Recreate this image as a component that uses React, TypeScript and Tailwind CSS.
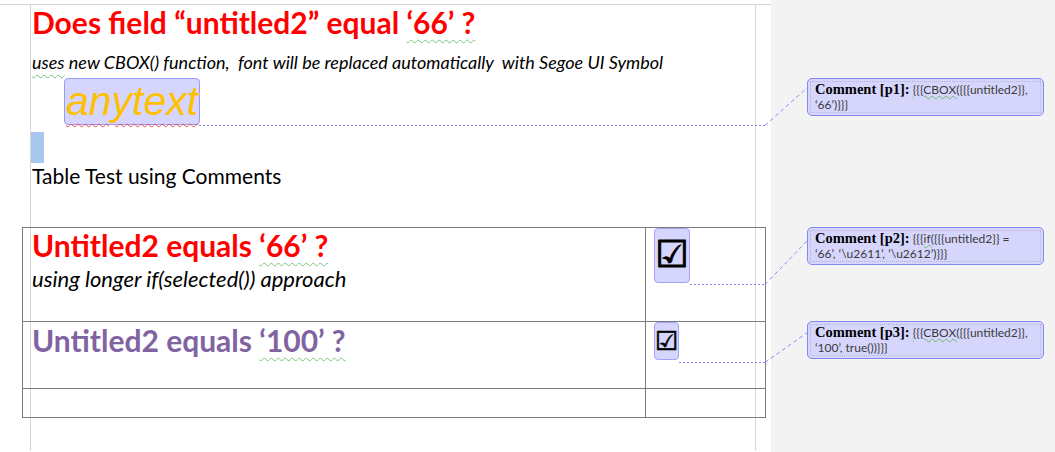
import React from "react";

const calibri = { fontFamily: "Lato, 'Open Sans', sans-serif" };

function Comment({ tag, first, second }: { tag: string; first: React.ReactNode; second: React.ReactNode }) {
  return (
    <div className="w-[237px] rounded-[5px] border-[1.5px] border-[#8686f2] bg-[#d6d6fd] p-[2px]">
      <div className="border border-dotted border-[#b4b4d8] px-[4px] text-[12px] leading-[15px] text-[#3a3a3a]" style={calibri}>
        <span className="font-['Liberation_Serif',serif] text-[14.5px] font-bold text-black">Comment [{tag}]:</span>{" "}
        {first}
        <br />
        {second}
      </div>
    </div>
  );
}

const wavyGreen = "underline decoration-wavy decoration-[#7bc47b] decoration-1 underline-offset-[5px]";

export default function App() {
  return (
    <div className="relative flex h-[452px] w-[1055px] overflow-hidden bg-white">
      {/* page */}
      <div className="w-[771px] shrink-0 bg-white">
        <div className="h-[5px] border-b border-[#d4d4d4]" />
        <div className="ml-[30px] h-[446px] w-[726px] border-x border-[#d6d6d6] pl-px" style={calibri}>
          <h1 className="text-[30px] font-bold leading-[34px] text-[#ff0000]">
            Does field “untitled2” equal <span className={wavyGreen}>‘66’ ?</span>
          </h1>
          <p className="mt-[12px] whitespace-pre text-[18px] italic leading-[22px] text-black">
            <span className={wavyGreen}>uses</span> new CBOX() function,  font will be replaced automatically  with Segoe UI Symbol
          </p>
          <div className="ml-[32px] mt-[5px] flex h-[47px] w-[136px] items-start rounded-[4px] border border-[#9a9af4] bg-[#d5d5fd] pl-[1px]">
            <span className="font-['Liberation_Sans',sans-serif] text-[41px] italic leading-[44px] text-[#ffc000] underline decoration-wavy decoration-[#e05050] decoration-1 underline-offset-[8px]">
              anytext
            </span>
          </div>
          <div className="-ml-px mt-[7px] h-[31px] w-[13px] bg-[#a9c7ee]" />
          <p className="mt-[1px] text-[21px] leading-[24px] text-black">Table Test using Comments</p>

          <table className="-ml-[10px] mt-[39px] w-[744px] border-collapse">
            <tbody>
              <tr className="h-[94px]">
                <td className="border border-[#7c7c7c] pl-[9px] align-top">
                  <div className="text-[30px] font-bold leading-[34px] text-[#ff0000]">
                    Untitled2 equals <span className={wavyGreen}>‘66’ ?</span>
                  </div>
                  <div className="mt-[4px] text-[22px] italic leading-[26px] text-black">using longer if(selected()) approach</div>
                </td>
                <td className="w-[120px] border border-[#7c7c7c] pl-[8px] align-top">
                  <div className="flex h-[55px] w-[36px] items-center justify-center rounded-[4px] border border-[#a4a4f6] bg-[#d5d5fd] pb-[2px]">
                    <span className="font-['DejaVu_Sans',sans-serif] text-[37px] leading-none text-black [-webkit-text-stroke:1px_black]">☑</span>
                  </div>
                </td>
              </tr>
              <tr className="h-[67px]">
                <td className="border border-[#7c7c7c] pl-[9px] align-top">
                  <div className="mt-[1px] text-[30px] font-bold leading-[34px] text-[#8064a2]">
                    Untitled2 equals <span className={wavyGreen}>‘100’ ?</span>
                  </div>
                </td>
                <td className="border border-[#7c7c7c] pl-[8px] align-top">
                  <div className="flex h-[38px] w-[25px] items-center justify-center rounded-[4px] border border-[#a4a4f6] bg-[#d5d5fd]">
                    <span className="font-['DejaVu_Sans',sans-serif] text-[26px] leading-none text-black [-webkit-text-stroke:0.6px_black]">☑</span>
                  </div>
                </td>
              </tr>
              <tr className="h-[29px]">
                <td className="border border-[#7c7c7c]" />
                <td className="border border-[#7c7c7c]" />
              </tr>
            </tbody>
          </table>
        </div>
      </div>

      {/* comment pane */}
      <div className="flex-1 bg-[#f3f3f3] pl-[36px]">
        <div className="mt-[78px]">
          <Comment
            tag="p1"
            first={<><span className="underline decoration-wavy decoration-[#6cb86c] decoration-1">{"{{{CBOX("}</span>{"{{{untitled2}},"}</>}
            second="‘66’)}}}"
          />
        </div>
        <div className="mt-[111px]">
          <Comment
            tag="p2"
            first={<>{"{{{"}<span className="underline decoration-wavy decoration-[#6cb86c] decoration-1">if(</span>{"{{{untitled2}} ="}</>}
            second={"‘66’, ‘\\u2611’, ‘\\u2612’)}}}"}
          />
        </div>
        <div className="mt-[56px]">
          <Comment
            tag="p3"
            first={<><span className="underline decoration-wavy decoration-[#6cb86c] decoration-1">{"{{{CBOX("}</span>{"{{{untitled2}},"}</>}
            second="‘100’, true())}}}"
          />
        </div>
      </div>

      {/* connector lines */}
      <svg className="pointer-events-none absolute inset-0" width="1055" height="452">
        <g stroke="#8a8aff" strokeWidth="1" fill="none">
          <path d="M199 125.5 H765" strokeDasharray="2 2" />
          <path d="M765 125.5 L808 87" strokeDasharray="4 3" />
          <path d="M690 284.5 H765" strokeDasharray="2 2" />
          <path d="M765 284.5 L808 240" strokeDasharray="4 3" />
          <path d="M679 362.5 H765" strokeDasharray="2 2" />
          <path d="M765 362.5 L808 332" strokeDasharray="4 3" />
        </g>
      </svg>
    </div>
  );
}
